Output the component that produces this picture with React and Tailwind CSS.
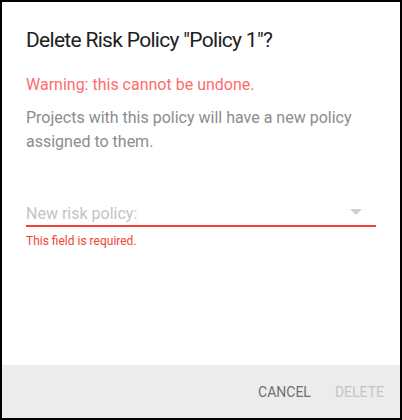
export default function App() {
    return (
        <div className="w-[402px] h-[420px] bg-black p-[2px]" style={{ fontFamily: 'Roboto, "Liberation Sans", sans-serif' }}>
            <div className="w-full h-full bg-white flex flex-col">
                {/* Body */}
                <div className="flex-1 px-6 pt-[22px]">
                    <h2 className="text-[21px] leading-8 tracking-[-0.7px] text-[#212121] font-normal">Delete Risk Policy "Policy 1"?</h2>
                    <p className="mt-[17px] text-base leading-6 text-[#ff6b6b]">Warning: this cannot be undone.</p>
                    <p className="mt-[9px] text-base leading-6 text-[#8c8c8c]">
                        Projects with this policy will have a new policy assigned to them.
                    </p>

                    {/* Select field */}
                    <div className="mt-[49px]">
                        <div className="relative flex items-center h-[24px] border-b-2 border-[#f44336]">
                            <span className="text-base text-[#c4c4c4]">New risk policy:</span>
                            <svg className="absolute right-[14px] top-[6px] w-[12px] h-[6px]" viewBox="0 0 10 5">
                                <path d="M0 0 L10 0 L5 5 Z" fill="#cfcfcf" />
                            </svg>
                        </div>
                        <p className="mt-[6px] text-xs text-[#f44336]">This field is required.</p>
                    </div>
                </div>

                {/* Footer */}
                <div className="h-[53px] bg-[#ececec] flex items-center justify-end pr-2">
                    <button className="px-2 h-9 text-sm text-[#707070]">CANCEL</button>
                    <button className="px-2 ml-2 h-9 text-sm text-[#c4c4c4]">DELETE</button>
                </div>
            </div>
        </div>
    );
}
